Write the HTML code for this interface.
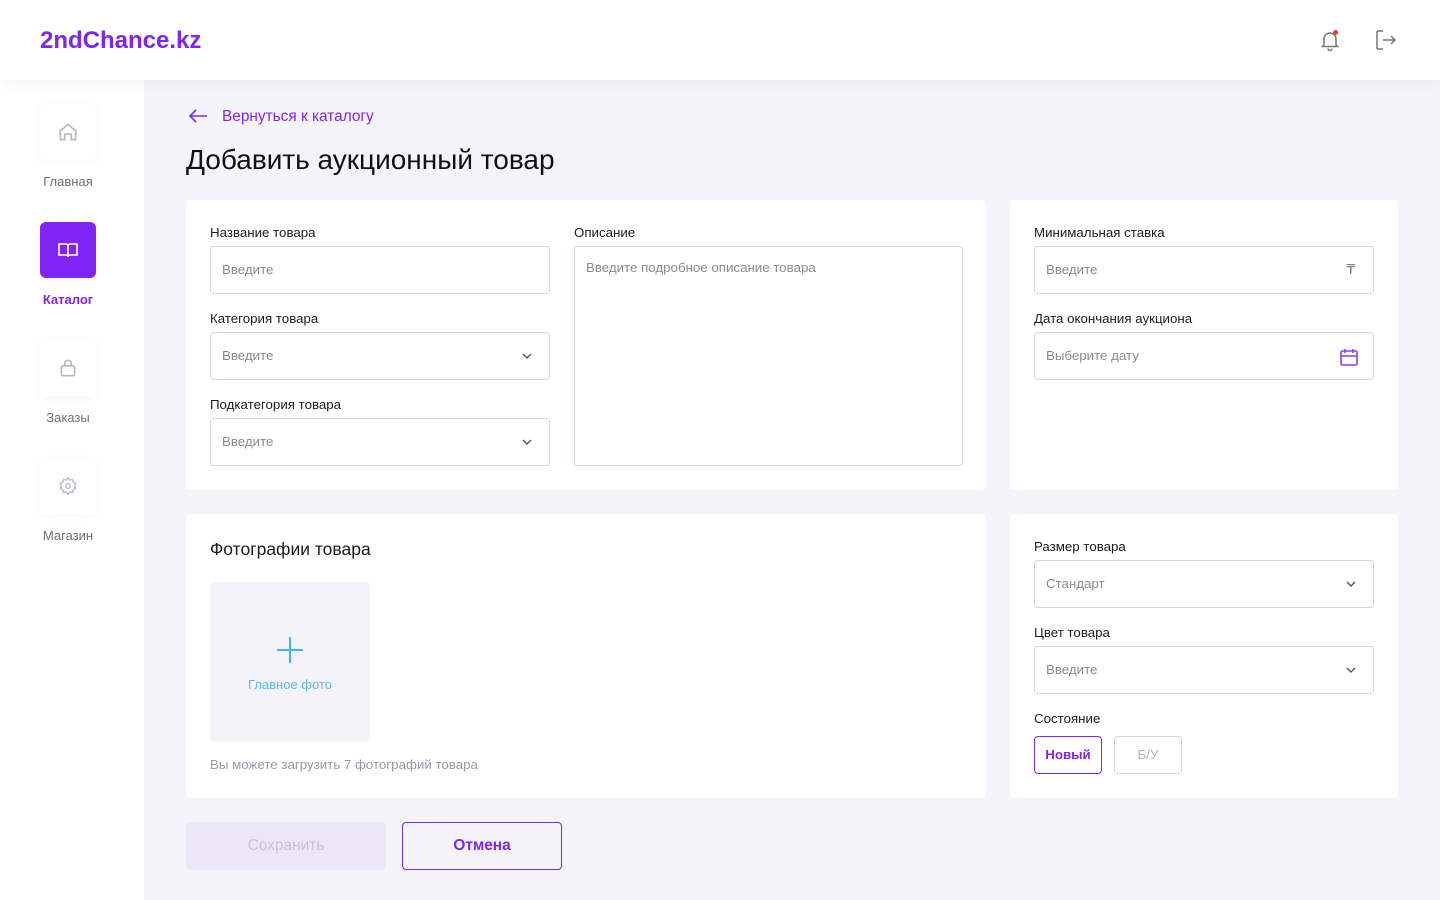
<!DOCTYPE html>
<html><head><meta charset="utf-8"><style>
*{box-sizing:border-box;margin:0;padding:0}
body{width:1440px;height:900px;background:#f5f4fa;font-family:"Liberation Sans",sans-serif;position:relative;overflow:hidden;color:#1c1c1c}
.hdr{position:absolute;left:0;top:0;width:1440px;height:80px;background:#fff;box-shadow:0 2px 14px rgba(0,0,0,.05);z-index:2}
.logo{position:absolute;left:40px;top:27px;font-size:24px;font-weight:bold;color:#8024f6}
.side{position:absolute;left:0;top:80px;width:144px;height:820px;background:#fff}
.nav{position:absolute;left:40px;width:56px;height:56px;border-radius:6px;background:#fff;box-shadow:0 2px 10px rgba(0,0,0,.04);display:flex;align-items:center;justify-content:center}
.nl{position:absolute;left:0;width:136px;text-align:center;font-size:13px;color:#6e6e78}
.abs{position:absolute}
.card{position:absolute;background:#fff;border-radius:4px}
.lbl{position:absolute;font-size:13.3px;color:#1c1c1c}
.inp{position:absolute;border:1px solid #d6d0e6;border-radius:4px;height:48px;font-size:13.3px;color:#8a8a92;padding:0 11px;line-height:46px;background:#fff}
.chev{position:absolute;right:16px;top:17px}
</style></head><body>
<div class="hdr">
<div class="logo">2ndChance.kz</div>
<svg class="abs" style="left:1318px;top:28px" width="24" height="24" viewBox="0 0 24 24" fill="none" stroke="#777" stroke-width="1.5"><path d="M6 17V11a6 6 0 0 1 12 0v6l1.5 1.5h-15z"/><path d="M10 20.5a2 2 0 0 0 4 0"/><circle cx="17.5" cy="4.5" r="2.5" fill="#f33" stroke="none"/></svg>
<svg class="abs" style="left:1374px;top:29px" width="24" height="22" viewBox="0 0 24 22" fill="none" stroke="#777" stroke-width="1.5"><path d="M9 2H4a1 1 0 0 0-1 1v16a1 1 0 0 0 1 1h5"/><path d="M9 11h12M17 7l4 4-4 4"/></svg>
</div>
<div class="side">
<div class="nav" style="top:24px"><svg width="22" height="22" viewBox="0 0 20 20" fill="none" stroke="#b8b6c6" stroke-width="1.5"><path d="M3 9l7-6 7 6v8h-4v-5H7v5H3z"/></svg></div>
<div class="nl" style="top:94px">Главная</div>
<div class="nav" style="top:142px;background:#8024f6"><svg width="22" height="20" viewBox="0 0 22 20" fill="none" stroke="#fff" stroke-width="1.6"><path d="M2 4h7a2 2 0 0 1 2 2v11a2 2 0 0 0-2-2H2zM20 4h-7a2 2 0 0 0-2 2v11a2 2 0 0 1 2-2h7z"/></svg></div>
<div class="nl" style="top:212px;color:#8024f6;font-weight:bold">Каталог</div>
<div class="nav" style="top:260px"><svg width="22" height="22" viewBox="0 0 20 20" fill="none" stroke="#b8b6c6" stroke-width="1.5"><rect x="4" y="8" width="12" height="9" rx="1.5"/><path d="M7 8V6a3 3 0 0 1 6 0v2"/></svg></div>
<div class="nl" style="top:330px">Заказы</div>
<div class="nav" style="top:378px"><svg width="22" height="22" viewBox="0 0 24 24" fill="none" stroke="#b8b6c6" stroke-width="1.5"><circle cx="12" cy="12" r="2.5"/><path d="M12 3l2 2.5 3-.5 .8 3 2.7 1.5-1.3 2.5 1.3 2.5-2.7 1.5-.8 3-3-.5-2 2.5-2-2.5-3 .5-.8-3L3.5 14.5 4.8 12 3.5 9.5 6.2 8 7 5l3 .5z"/></svg></div>
<div class="nl" style="top:448px">Магазин</div>
</div>
<svg class="abs" style="left:188px;top:108px" width="20" height="16" viewBox="0 0 20 16" fill="none" stroke="#8024f6" stroke-width="1.6"><path d="M19 8H2M8 2L2 8l6 6"/></svg>
<div class="abs" style="left:222px;top:108px;font-size:15.4px;color:#8024f6">Вернуться к каталогу</div>
<div class="abs" style="left:186px;top:144px;font-size:28px;color:#111">Добавить аукционный товар</div>

<div class="card" style="left:186px;top:200px;width:800px;height:290px"></div>
<div class="lbl" style="left:210px;top:225px">Название товара</div>
<div class="inp" style="left:210px;top:246px;width:340px">Введите</div>
<div class="lbl" style="left:210px;top:311px">Категория товара</div>
<div class="inp" style="left:210px;top:332px;width:340px">Введите<svg class="chev" width="12" height="12" viewBox="0 0 12 12" fill="none" stroke="#555" stroke-width="1.4"><path d="M2 4l4 4 4-4"/></svg></div>
<div class="lbl" style="left:210px;top:397px">Подкатегория товара</div>
<div class="inp" style="left:210px;top:418px;width:340px">Введите<svg class="chev" width="12" height="12" viewBox="0 0 12 12" fill="none" stroke="#555" stroke-width="1.4"><path d="M2 4l4 4 4-4"/></svg></div>
<div class="lbl" style="left:574px;top:225px">Описание</div>
<div class="inp" style="left:574px;top:246px;width:389px;height:220px;line-height:normal;padding-top:13px">Введите подробное описание товара</div>

<div class="card" style="left:1010px;top:200px;width:388px;height:290px"></div>
<div class="lbl" style="left:1034px;top:225px">Минимальная ставка</div>
<div class="inp" style="left:1034px;top:246px;width:340px">Введите<span style="position:absolute;right:18px;color:#777">₸</span></div>
<div class="lbl" style="left:1034px;top:311px">Дата окончания аукциона</div>
<div class="inp" style="left:1034px;top:332px;width:340px">Выберите дату<svg style="position:absolute;right:14px;top:14px" width="20" height="20" viewBox="0 0 20 20" fill="none" stroke="#8b3cf7" stroke-width="1.6"><rect x="2" y="4" width="16" height="14" rx="1.5"/><path d="M2 9h16M6 2v4M14 2v4"/></svg></div>

<div class="card" style="left:186px;top:514px;width:800px;height:284px"></div>
<div class="abs" style="left:210px;top:539px;font-size:17.5px;color:#1c1c1c">Фотографии товара</div>
<div class="abs" style="left:210px;top:582px;width:160px;height:160px;background:#f5f3fa;border-radius:4px"></div>
<svg class="abs" style="left:277px;top:637px" width="26" height="26" viewBox="0 0 26 26" stroke="#3fb4f5" stroke-width="2"><path d="M13 0v26M0 13h26"/></svg>
<div class="abs" style="left:210px;top:677px;width:160px;text-align:center;font-size:13px;color:#5ab8f2">Главное фото</div>
<div class="abs" style="left:210px;top:757px;font-size:13.3px;color:#9a98a8">Вы можете загрузить 7 фотографий товара</div>

<div class="card" style="left:1010px;top:514px;width:388px;height:284px"></div>
<div class="lbl" style="left:1034px;top:539px">Размер товара</div>
<div class="inp" style="left:1034px;top:560px;width:340px">Стандарт<svg class="chev" width="12" height="12" viewBox="0 0 12 12" fill="none" stroke="#555" stroke-width="1.4"><path d="M2 4l4 4 4-4"/></svg></div>
<div class="lbl" style="left:1034px;top:625px">Цвет товара</div>
<div class="inp" style="left:1034px;top:646px;width:340px">Введите<svg class="chev" width="12" height="12" viewBox="0 0 12 12" fill="none" stroke="#555" stroke-width="1.4"><path d="M2 4l4 4 4-4"/></svg></div>
<div class="lbl" style="left:1034px;top:711px">Состояние</div>
<div class="abs" style="left:1034px;top:736px;width:68px;height:38px;border:1px solid #8024f6;border-radius:4px;text-align:center;line-height:36px;font-size:13.3px;font-weight:bold;color:#8024f6">Новый</div>
<div class="abs" style="left:1114px;top:736px;width:68px;height:38px;border:1px solid #d6d0e6;border-radius:4px;text-align:center;line-height:36px;font-size:13.3px;color:#b4b2c0">Б/У</div>

<div class="abs" style="left:186px;top:822px;width:200px;height:48px;background:#ede6f7;border-radius:4px;text-align:center;line-height:48px;font-size:15.4px;color:#c6c2d0">Сохранить</div>
<div class="abs" style="left:402px;top:822px;width:160px;height:48px;border:1px solid #8024f6;border-radius:4px;text-align:center;line-height:46px;font-size:15.4px;font-weight:bold;color:#8024f6">Отмена</div>
</body></html>
